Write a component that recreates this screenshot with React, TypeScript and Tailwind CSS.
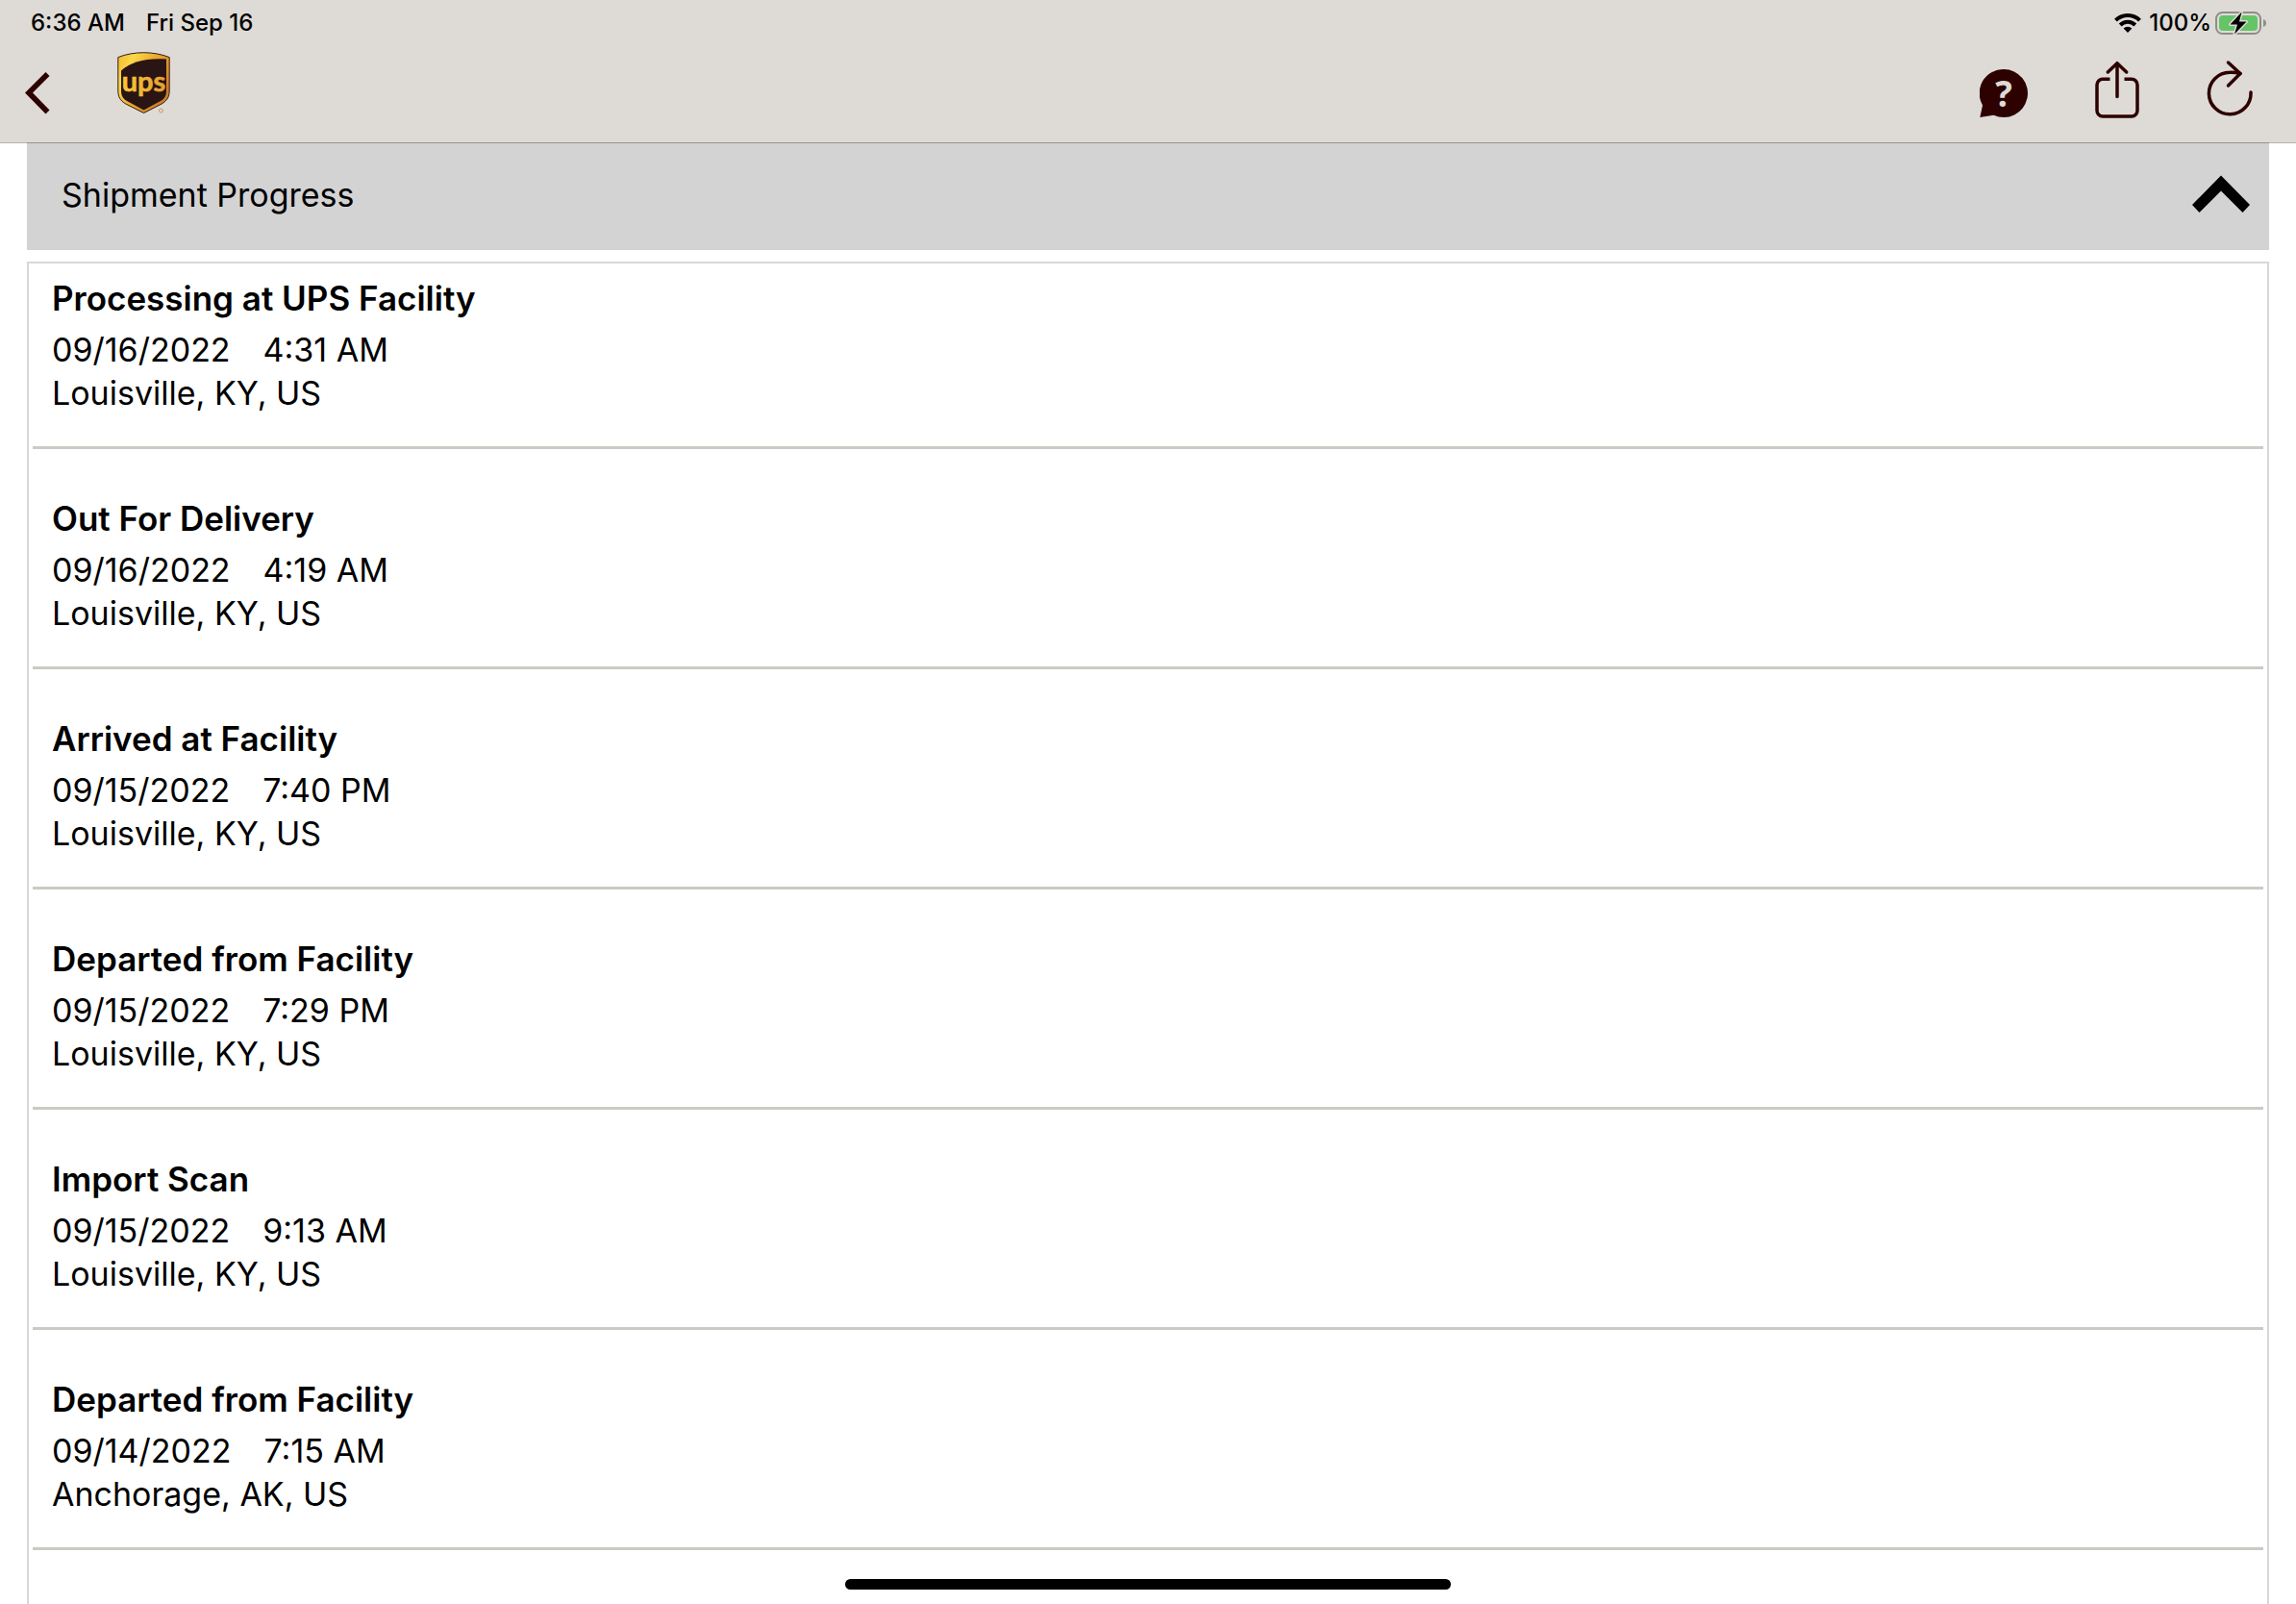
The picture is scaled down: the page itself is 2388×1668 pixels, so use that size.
import React, { useState } from 'react';

interface ShipmentEvent {
  title: string;
  date: string;
  time: string;
  location: string;
}

const EVENTS: ShipmentEvent[] = [
  { title: 'Processing at UPS Facility', date: '09/16/2022', time: '4:31 AM', location: 'Louisville, KY, US' },
  { title: 'Out For Delivery', date: '09/16/2022', time: '4:19 AM', location: 'Louisville, KY, US' },
  { title: 'Arrived at Facility', date: '09/15/2022', time: '7:40 PM', location: 'Louisville, KY, US' },
  { title: 'Departed from Facility', date: '09/15/2022', time: '7:29 PM', location: 'Louisville, KY, US' },
  { title: 'Import Scan', date: '09/15/2022', time: '9:13 AM', location: 'Louisville, KY, US' },
  { title: 'Departed from Facility', date: '09/14/2022', time: '7:15 AM', location: 'Anchorage, AK, US' },
];

function WifiIcon() {
  return (
    <svg width="28" height="20" viewBox="0 0 28 20" fill="none" stroke="black" strokeWidth="4" aria-hidden="true">
      <path d="M1.5 7.2a17.6 17.6 0 0 1 25 0" />
      <path d="M6.2 12a11 11 0 0 1 15.6 0" />
      <path d="M14 20l-4.4-4.5a6.2 6.2 0 0 1 8.8 0z" fill="black" stroke="none" />
    </svg>
  );
}

function BatteryIcon() {
  return (
    <svg width="54" height="24" viewBox="0 0 54 24" aria-hidden="true">
      <rect x="1" y="1" width="46" height="22" rx="6.5" fill="none" stroke="#8f8d8b" strokeWidth="2" />
      <path d="M50 8c4 1.2 4 6.8 0 8z" fill="#8f8d8b" />
      <rect x="4" y="4" width="40" height="16" rx="4" fill="#65c466" />
      <path
        d="M27.5 .5L15.5 13.5h7.5L20 23.5 32.5 10.5h-7.5z"
        fill="black"
        stroke="#dedbd6"
        strokeWidth="3"
        strokeLinejoin="round"
        paintOrder="stroke"
      />
    </svg>
  );
}

function BackIcon() {
  return (
    <svg width="26" height="64" viewBox="0 0 26 64" fill="#2d0100" aria-hidden="true">
      <path d="M0 34.5L21.5 13l4 4L8 34.5 25.5 52.5l-4 4z" />
    </svg>
  );
}

function UpsLogo() {
  return (
    <svg width="55" height="65" viewBox="0 0 55 65" role="img" aria-label="UPS">
      <defs>
        <linearGradient id="gold" x1="0" y1="0" x2="1" y2="0.6">
          <stop offset="0" stopColor="#f2b92c" />
          <stop offset="0.25" stopColor="#fbd848" />
          <stop offset="0.6" stopColor="#eaa62a" />
          <stop offset="1" stopColor="#c97f26" />
        </linearGradient>
        <linearGradient id="letters" x1="0" y1="0" x2="1" y2="0">
          <stop offset="0" stopColor="#f9c838" />
          <stop offset="1" stopColor="#e3a030" />
        </linearGradient>
      </defs>
      <path
        d="M.8 5.6C17-.9 38-.9 54.2 5.6V40c0 6.5-2 10.5-8 14L27.5 63.5 8.8 54C2.8 50.5.8 46.5.8 40z"
        fill="url(#gold)"
        stroke="#33191a"
        strokeWidth="1"
      />
      <path
        d="M4 19.5C15 9.5 31 6 51 7.5V40c0 5.5-1.7 8.5-6.5 11.3L27.5 60.5 10.5 51.3C5.7 48.5 4 45.5 4 40z"
        fill="#2b1414"
      />
      <text
        x="27.5"
        y="41"
        textAnchor="middle"
        fill="url(#letters)"
        stroke="url(#letters)"
        strokeWidth="0.6"
        className="font-['Lato',sans-serif] text-[29px] font-bold"
      >
        ups
      </text>
      <circle cx="45.5" cy="61" r="2" fill="none" stroke="#c9975f" strokeWidth="1" />
    </svg>
  );
}

function HelpIcon() {
  return (
    <svg width="50" height="64" viewBox="0 0 50 64" aria-hidden="true">
      <path d="M25 10a25 25 0 1 1-10.5 47.7L.3 60 3 47.5A25 25 0 0 1 25 10z" fill="#2d0100" />
      <text
        x="25"
        y="49"
        textAnchor="middle"
        fill="#dedbd6"
        className="font-['Open_Sans',sans-serif] text-[37px] font-bold"
      >
        ?
      </text>
    </svg>
  );
}

function ShareIcon() {
  return (
    <svg
      width="46"
      height="64"
      viewBox="0 0 46 64"
      fill="none"
      stroke="#2d0100"
      strokeWidth="3.5"
      aria-hidden="true"
    >
      <path d="M15.5 20.2H8a6 6 0 0 0-6 6V53a6 6 0 0 0 6 6h30a6 6 0 0 0 6-6V26.2a6 6 0 0 0-6-6H30.5" />
      <path d="M23 38.5V4M13.3 13L23 3.7 32.7 13" strokeLinecap="round" strokeLinejoin="round" />
    </svg>
  );
}

function RefreshIcon() {
  return (
    <svg
      width="48"
      height="64"
      viewBox="0 0 48 64"
      fill="none"
      stroke="#2d0100"
      strokeWidth="3.5"
      strokeLinecap="round"
      strokeLinejoin="round"
      aria-hidden="true"
    >
      <path d="M46 34A21.8 21.8 0 1 1 24.2 13.2Q30 13 35 14.5" />
      <path d="M22.5 3L35 14.5 22.5 27" />
    </svg>
  );
}

function ChevronUp({ open }: { open: boolean }) {
  return (
    <svg
      width="60"
      height="40"
      viewBox="0 0 60 40"
      fill="black"
      aria-hidden="true"
      className={open ? '' : 'rotate-180'}
    >
      <path d="M30 .5L60 31l-7.5 8L30 16.5 7.5 39 0 31z" />
    </svg>
  );
}

function StatusBar() {
  return (
    <div className="flex h-12 items-center justify-between pl-8 pr-[30px] text-[24px] font-medium leading-8 text-black">
      <div className="flex gap-[22px]">
        <span>6:36 AM</span>
        <span>Fri Sep 16</span>
      </div>
      <div className="flex items-center gap-1">
        <div className="flex items-center gap-2">
          <WifiIcon />
          <span>100%</span>
        </div>
        <BatteryIcon />
      </div>
    </div>
  );
}

function EventRow({ event }: { event: ShipmentEvent }) {
  return (
    <li className="mx-1 border-b-[3px] border-[#cdc9c4] px-5 pb-[33px] pt-[50px] first:pt-[14px]">
      <h3 className="mb-2 text-[35px] font-semibold leading-[45px]">{event.title}</h3>
      <p className="flex gap-[34px]">
        <span>{event.date}</span>
        <span>{event.time}</span>
      </p>
      <p>{event.location}</p>
    </li>
  );
}

export default function App() {
  const [open, setOpen] = useState(true);

  return (
    <div className="relative flex h-screen flex-col overflow-hidden bg-white font-['Inter',sans-serif] text-black">
      <header className="relative z-10 shrink-0 border-b border-black/30 bg-[#dedbd6] bg-clip-padding">
        <StatusBar />
        <div className="flex h-[100px] items-center justify-between pb-2 pl-[26px] pr-[45px]">
          <div className="flex items-center gap-[70px]">
            <button type="button" aria-label="Back">
              <BackIcon />
            </button>
            <div className="mb-4">
              <UpsLogo />
            </div>
          </div>
          <div className="flex items-center gap-[70px]">
            <button type="button" aria-label="Help">
              <HelpIcon />
            </button>
            <button type="button" aria-label="Share">
              <ShareIcon />
            </button>
            <button type="button" aria-label="Refresh">
              <RefreshIcon />
            </button>
          </div>
        </div>
      </header>

      <main className="-mt-px flex min-h-0 flex-1 flex-col px-7 text-[34px] leading-[45px]">
        <h2 className="mb-3 shrink-0 bg-[#d3d3d3]">
          <button
            type="button"
            aria-expanded={open}
            onClick={() => setOpen(!open)}
            className="flex h-28 w-full items-center justify-between pb-1 pl-9 pr-5"
          >
            <span>Shipment Progress</span>
            <ChevronUp open={open} />
          </button>
        </h2>
        {open && (
          <ul className="min-h-0 flex-1 overflow-hidden border-2 border-b-0 border-[#d8d8d8]">
            {EVENTS.map((event) => (
              <EventRow key={`${event.date} ${event.time}`} event={event} />
            ))}
          </ul>
        )}
      </main>

      {/* Home indicator */}
      <div className="absolute bottom-[15px] left-1/2 h-[11px] w-[630px] -translate-x-1/2 rounded-full bg-black" />
    </div>
  );
}
